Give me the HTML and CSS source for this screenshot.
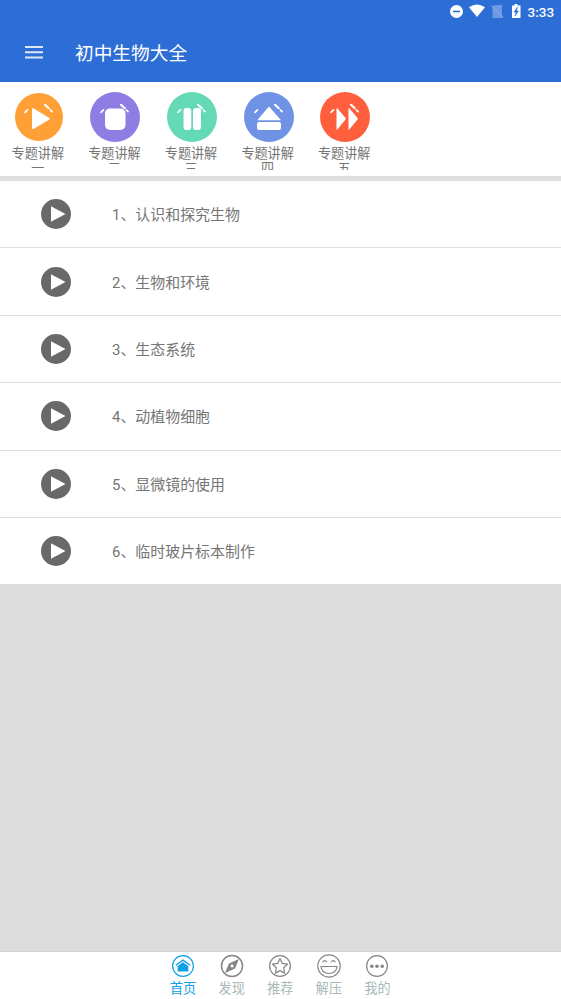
FILE: index.html
```html
<!DOCTYPE html>
<html lang="zh-CN">
<head>
<meta charset="utf-8">
<title>初中生物大全</title>
<link rel="stylesheet" href="styles.css">
</head>
<body>
<svg class="defs" width="0" height="0">
  <symbol id="play" viewBox="0 0 30 30"><circle cx="15" cy="15" r="15" fill="#696969"/><path d="M10 7.3 24.5 15 10 22.7z" fill="#fff"/></symbol>
  <symbol id="sparks" viewBox="0 0 50 50"><g fill="none" stroke="#fff" stroke-linecap="round"><path d="M11 20.300l2.500-2.400" stroke-width="1.700"/><path d="M31 12.800l3.800 3.400" stroke-width="2.200"/><path d="M36.500 18.200l1.500 1.500" stroke-width="1.700"/></g></symbol>
</svg>
<div class="screen">
  <header class="top">
    <div class="status">
      <svg width="104" height="20" viewBox="0 0 104 20">
        <circle cx="6.500" cy="11.500" r="6.500" fill="#fff"/><path d="M3 11.500h7" stroke="#2d6ed6" stroke-width="1.600"/>
        <path d="M19 7.300Q27 1.500 35 7.300L27 17z" fill="#fff"/>
        <path d="M45 5h7v13h-9.500V7.500z" fill="#fff" opacity=".3"/><path d="M41.500 5.300 53 17.300" stroke="#83a9e6" stroke-width="1.200"/>
        <path d="M62 5.500h2.500V4h3v1.500H70.500V18H62z" fill="#fff"/><path d="M67.500 7l-3.500 5h2l-1 4 3.500-5h-2z" fill="#2d6ed6" stroke="#2d6ed6" stroke-width=".5"/>
        <text class="clock" x="77.500" y="16.500">3:33</text>
      </svg>
    </div>
    <div class="bar">
      <svg class="menu" width="18" height="14" viewBox="0 0 18 14"><path d="M0 2h18M0 7.300h18M0 12.600h18" stroke="#dce7f9" stroke-width="2"/></svg>
      <h1>初中生物大全</h1>
    </div>
  </header>
  <nav class="topics">
    <a class="topic"><svg viewBox="0 0 50 50"><circle cx="25" cy="25" r="24" fill="#ffa036"/><use href="#sparks"/><path d="M18 17q0-1.500 1.400-.7l16 9.700q1 .7 0 1.400l-16 9.500q-1.400.7-1.400-.9z" fill="#fff"/></svg><span>专题讲解一</span></a>
    <a class="topic"><svg viewBox="0 0 50 50"><circle cx="25" cy="25" r="25" fill="#8f7de3"/><use href="#sparks"/><rect x="15" y="16.500" width="20.500" height="21.500" rx="5" fill="#fff"/></svg><span>专题讲解二</span></a>
    <a class="topic"><svg viewBox="0 0 50 50"><circle cx="25" cy="25" r="25" fill="#63d9b6"/><use href="#sparks"/><rect x="16.500" y="16" width="7.800" height="22" rx="3" fill="#fff"/><rect x="26" y="16" width="8" height="22" rx="3" fill="#fff"/></svg><span>专题讲解三</span></a>
    <a class="topic"><svg viewBox="0 0 50 50"><circle cx="25" cy="25" r="25" fill="#7092e5"/><use href="#sparks"/><path d="M25 14.500 37 28.200H13.200z" fill="#fff"/><rect x="13" y="30" width="24" height="8" rx="2" fill="#fff"/></svg><span>专题讲解四</span></a>
    <a class="topic"><svg viewBox="0 0 50 50"><circle cx="25" cy="25" r="25" fill="#ff5f3d"/><use href="#sparks"/><path d="M16.500 16.500q0-1 .8-.2l8.200 9.600q.6.800 0 1.600l-8.200 10q-.8.800-.8-.2zM28.500 16.500q0-1 .8-.2l8.200 9.600q.6.800 0 1.600l-8.200 10q-.8.800-.8-.2z" fill="#fff"/></svg><span>专题讲解五</span></a>
  </nav>
  <main class="list">
    <div class="row"><svg><use href="#play"/></svg><span>1、认识和探究生物</span></div>
    <div class="row"><svg><use href="#play"/></svg><span>2、生物和环境</span></div>
    <div class="row"><svg><use href="#play"/></svg><span>3、生态系统</span></div>
    <div class="row"><svg><use href="#play"/></svg><span>4、动植物细胞</span></div>
    <div class="row"><svg><use href="#play"/></svg><span>5、显微镜的使用</span></div>
    <div class="row"><svg><use href="#play"/></svg><span>6、临时玻片标本制作</span></div>
  </main>
  <footer class="tabs">
    <a class="tab active"><svg viewBox="0 0 24 24"><circle cx="12" cy="12" r="10.400"/><path d="M4.800 11.200 12 6.200l7.200 5" stroke-width="1.400"/><path class="solid" d="M12 8.300 17.300 12V17.500H6.700V12z"/></svg><span>首页</span></a>
    <a class="tab"><svg viewBox="0 0 24 24"><circle cx="12" cy="12" r="10.500" stroke-width="1.500"/><path class="solid" fill-rule="evenodd" d="M19 5 15 14.500 5 19 9 9.500zM12 10.500a1.500 1.500 0 1 0 .1 3 1.500 1.500 0 0 0-.1-3z"/></svg><span>发现</span></a>
    <a class="tab"><svg viewBox="0 0 24 24"><circle cx="12" cy="12" r="10.400"/><path d="M12 4.500l2.300 4.900 5.200.8-3.800 3.600.9 5.300-4.600-2.500-4.600 2.500.9-5.300-3.800-3.600 5.200-.8z" stroke-linejoin="round"/></svg><span>推荐</span></a>
    <a class="tab"><svg viewBox="0 0 24 24"><circle cx="12" cy="12" r="11.200"/><path d="M4 12.500h16c0 4-3.500 7-8 7s-8-3-8-7zM5.500 8.300q2.200-3.500 4.400 0M14.100 8.300q2.200-3.500 4.400 0"/></svg><span>解压</span></a>
    <a class="tab"><svg viewBox="0 0 24 24"><circle cx="12" cy="12" r="10.400"/><g class="solid"><circle cx="6.800" cy="12.300" r="1.800"/><circle cx="12" cy="12.300" r="1.800"/><circle cx="17.200" cy="12.300" r="1.800"/></g></svg><span>我的</span></a>
  </footer>
</div>
</body>
</html>
```
FILE: styles.css
```css
* { box-sizing: border-box; }
body { margin: 0; font-family: Roboto, "Noto Sans CJK SC", sans-serif; }
.defs { display: block; height: 0; }
.screen { display: flex; flex-direction: column; height: 999px; background: #ddd; overflow: hidden; }
.top { height: 82px; flex: none; background: #2d6ed6; color: #fff; }
.status { height: 22px; display: flex; justify-content: flex-end; padding-right: 7px; }
.status svg { display: block; overflow: visible; }
.clock { font-size: 13.5px; font-weight: 500; fill: #fff; }
.bar { height: 60px; display: flex; align-items: center; padding-left: 25px; }
.menu { margin-right: 32px; }
h1 { margin: 0; padding-top: 3px; font-size: 18.7px; font-weight: 400; line-height: 28px; }
.topics { height: 94px; flex: none; display: flex; background: #fff; padding: 10px 0 0 0.5px; }
.topic { width: 76.6px; display: flex; flex-direction: column; align-items: center; }
.topic svg { width: 50px; height: 50px; flex: none; }
.topic span { width: 56px; padding-right: 2px; height: 24px; margin-top: 4px; overflow: hidden; text-align: center; font-size: 13.1px; line-height: 15px; color: #757575; word-break: break-all; }
.list { margin-top: 5px; }
.row { height: 67.4px; display: flex; align-items: center; background: #fff; border-bottom: 1.4px solid #ddd; padding-left: 41px; }
.row svg { width: 30px; height: 30px; }
.row span { margin-left: 41px; padding-bottom: 1px; font-size: 14.95px; color: #757575; }
.tabs { margin-top: auto; height: 48px; flex: none; display: flex; justify-content: center; background: #fff; border-top: 1px solid #d2d2d2; padding: 2px 0.4px 0 0; }
.tab { width: 48.6px; display: flex; flex-direction: column; align-items: center; color: #a8b8b6; font-size: 13.1px; line-height: 18px; }
.tab svg { width: 24px; height: 24px; flex: none; margin-bottom: 2px; fill: none; stroke: #858585; stroke-width: 1.2; }
.tab .solid { fill: #858585; stroke: none; }
.tab.active { color: #109fe6; }
.active svg { stroke: #109fe6; }
.tab.active .solid { fill: #109fe6; }
```
